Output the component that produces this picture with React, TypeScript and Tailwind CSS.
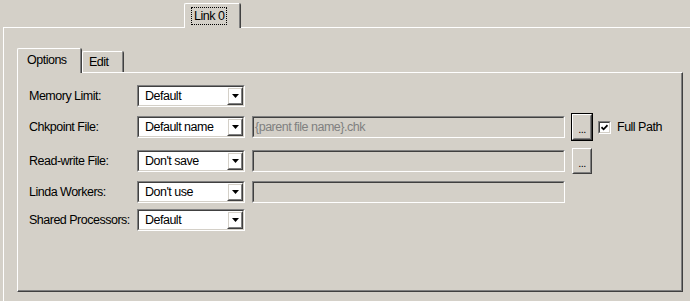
import type { ReactNode } from 'react';

// classic 3D frames
function Sunken({ className, children }: { className?: string; children?: ReactNode }) {
  return (
    <div className={`border border-t-[#808080] border-l-[#808080] border-r-white border-b-white ${className ?? ''}`}>
      <div className="h-full w-full border border-t-[#404040] border-l-[#404040] border-r-[#d4d0c8] border-b-[#d4d0c8]">
        {children}
      </div>
    </div>
  );
}

function Raised({ className, children }: { className?: string; children?: ReactNode }) {
  return (
    <div className={`border border-t-white border-l-white border-r-[#404040] border-b-[#404040] ${className ?? ''}`}>
      <div className="h-full w-full border border-t-[#d4d0c8] border-l-[#d4d0c8] border-r-[#808080] border-b-[#808080] flex items-center justify-center">
        {children}
      </div>
    </div>
  );
}

function Combo({ value }: { value: string }) {
  return (
    <Sunken className="w-[108px] h-[22px] shrink-0">
      <div className="flex h-full bg-white">
        <span className="flex-1 pl-[6px] leading-[18px]">{value}</span>
        <Raised className="w-[16px] h-full">
          <svg width="7" height="4" viewBox="0 0 7 4">
            <path d="M0 0h7L3.5 4z" fill="#000" />
          </svg>
        </Raised>
      </div>
    </Sunken>
  );
}

function Field({ text }: { text?: string }) {
  return (
    <Sunken className="ml-[7px] w-[313px] h-[22px] shrink-0">
      <div className="h-full bg-[#d4d0c8] pl-[1px] leading-[18px] text-[#808080]">{text}</div>
    </Sunken>
  );
}

function Browse({ isDefault }: { isDefault?: boolean }) {
  return (
    <div className={`ml-[6px] w-[22px] h-[28px] shrink-0 border ${isDefault ? 'border-black' : 'border-transparent'}`}>
      <Raised className="h-full w-full">
        <span className="mt-[5px] text-[11px] leading-none">...</span>
      </Raised>
    </div>
  );
}

export default function App() {
  const labelCls = "w-[108px] shrink-0";

  return (
    <div
      className="w-[690px] h-[301px] overflow-hidden bg-[#d4d0c8] text-black pt-[3px] pl-[3px] text-[12.5px] tracking-[-0.5px]"
      style={{ fontFamily: '"Liberation Sans", Arial, sans-serif' }}
    >
      {/* outer tab strip */}
      <div className="flex pl-[181px]">
        <div className="relative z-10 -mb-px h-[25px] w-[57px] rounded-tr-[2px] border-r border-[#404040] bg-[#d4d0c8]">
          <div className="h-full rounded-tl-[2px] border-t border-l border-white border-r border-r-[#808080] flex items-center pl-[6px]">
            <span className="h-[18px] border border-dotted border-black px-[2px] leading-[16px]">Link 0</span>
          </div>
        </div>
      </div>

      {/* outer panel */}
      <div className="w-[720px] h-[290px] border-t border-l border-white pl-[13px] pt-[20px]">
        {/* inner tabs */}
        <div className="flex items-end">
          <div className="relative z-10 -mb-px h-[25px] w-[65px] rounded-tr-[2px] border-r border-[#404040] bg-[#d4d0c8]">
            <div className="h-full rounded-tl-[2px] border-t border-l border-white border-r border-r-[#808080] flex items-center pl-[9px] pb-[1px]">
              Options
            </div>
          </div>
          <div className="h-[21px] w-[42px] rounded-tr-[2px] border-r border-[#404040]">
            <div className="h-full rounded-tl-[2px] border-t border-l border-white border-r border-r-[#808080] flex items-center pl-[6px] pt-[1px]">
              Edit
            </div>
          </div>
        </div>

        {/* inner panel */}
        <div className="w-[666px] h-[220px] border-t border-l border-white border-r border-b border-r-[#404040] border-b-[#404040]">
          <div className="h-full border-r border-b border-[#808080] pl-[11px] pt-[12px] flex flex-col gap-[6px]">
            <div className="flex items-center h-[22px]">
              <span className={labelCls}>Memory Limit:</span>
              <Combo value="Default" />
            </div>

            <div className="flex items-center h-[28px]">
              <span className={labelCls}>Chkpoint File:</span>
              <Combo value="Default name" />
              <Field text="{parent file name}.chk" />
              <Browse isDefault />
              <Sunken className="ml-[5px] w-[13px] h-[13px] shrink-0">
                <div className="h-full bg-white flex items-center justify-center">
                  <svg width="7" height="7" viewBox="0 0 7 7">
                    <path d="M0.5 3.2 L2.6 5.3 L6.5 1.2" fill="none" stroke="#000" strokeWidth="1.7" />
                  </svg>
                </div>
              </Sunken>
              <span className="ml-[6px]">Full Path</span>
            </div>

            <div className="flex items-center h-[28px]">
              <span className={labelCls}>Read-write File:</span>
              <Combo value="Don't save" />
              <Field />
              <Browse />
            </div>

            <div className="flex items-center h-[22px]">
              <span className={labelCls}>Linda Workers:</span>
              <Combo value="Don't use" />
              <Field />
            </div>

            <div className="flex items-center h-[22px]">
              <span className={labelCls}>Shared Processors:</span>
              <Combo value="Default" />
            </div>
          </div>
        </div>
      </div>
    </div>
  );
}
